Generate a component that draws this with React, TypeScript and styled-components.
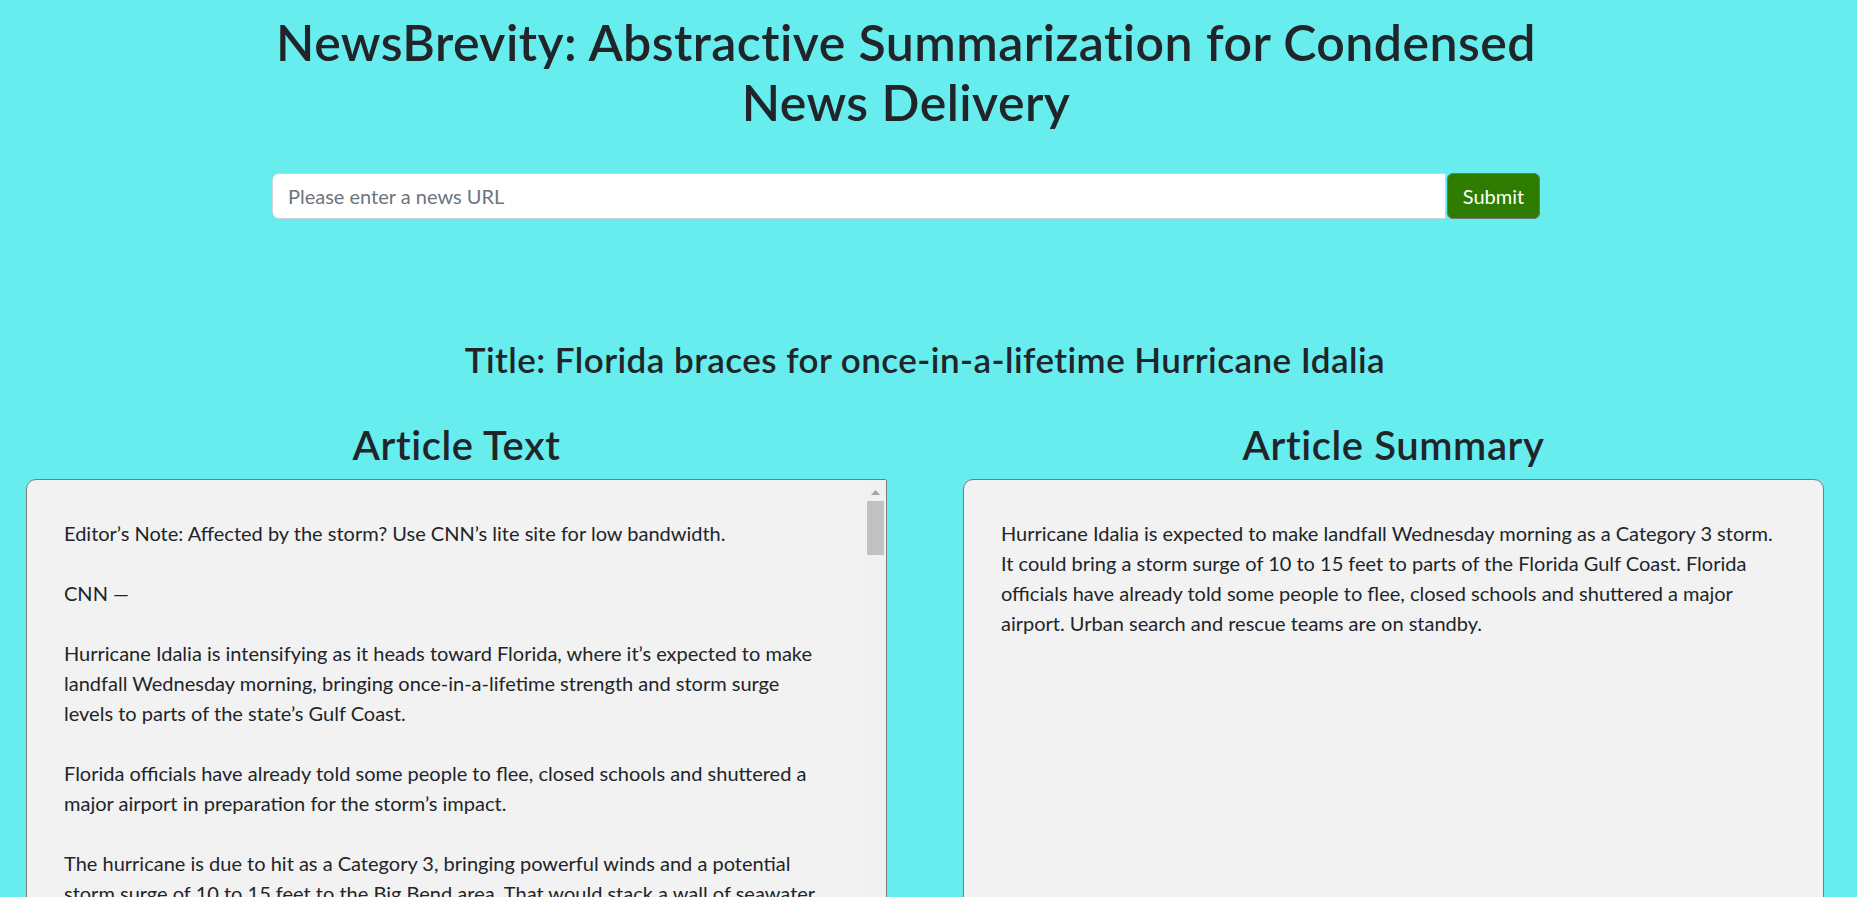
import React from "react";
import styled, { createGlobalStyle } from "styled-components";

const GlobalStyle = createGlobalStyle`
  html, body { margin: 0; padding: 0; }
  body {
    background: #67edee;
    font-family: Lato, "Liberation Sans", sans-serif;
    color: #212529;
    font-size: 20px;
    line-height: 1.5;
  }
  * { box-sizing: border-box; }
`;

const Page = styled.div`
  padding: 12px 0 40px;
`;

const Header = styled.header`
  width: 1268px;
  margin-left: 272px;
  display: flex;
  flex-direction: column;
  align-items: center;
`;

const AppTitle = styled.h1`
  margin: 0;
  font-size: 50px;
  font-weight: 600;
  line-height: 60px;
  letter-spacing: 0.45px;
  text-align: center;
`;

const SearchForm = styled.form`
  display: flex;
  width: 100%;
  gap: 1px;
  margin-top: 41px;
`;

const UrlInput = styled.input`
  flex: 1;
  height: 46px;
  padding: 0 15px;
  font-family: inherit;
  font-size: 20px;
  color: #212529;
  background: #fff;
  border: 1px solid #ced4da;
  border-radius: 7px 0 0 7px;
  outline: none;
  &::placeholder { color: #6c757d; }
`;

const SubmitButton = styled.button`
  width: 93px;
  height: 46px;
  font-family: inherit;
  font-size: 20px;
  color: #fff;
  background: #2e7d00;
  border: 1px solid #6c757d;
  border-radius: 6px;
  cursor: pointer;
`;

const Main = styled.main`
  padding: 0 33px 0 26px;
  margin-top: 119px;
`;

const ArticleTitle = styled.h3`
  margin: 0;
  font-size: 35px;
  font-weight: 600;
  line-height: 42px;
  letter-spacing: 0.45px;
  text-align: center;
`;

const Columns = styled.div`
  display: grid;
  grid-template-columns: 1fr 1fr;
  gap: 76px;
  margin-top: 41px;
`;

const Column = styled.section`
  display: flex;
  flex-direction: column;
  min-width: 0;
`;

const SectionHeading = styled.h2`
  margin: 0 0 10px;
  font-size: 40px;
  font-weight: 600;
  line-height: 48px;
  letter-spacing: 0.6px;
  text-align: center;
`;

const Card = styled.div<{ $scroll?: boolean }>`
  position: relative;
  height: 440px;
  padding: 38px ${(p) => (p.$scroll ? "26px" : "37px")} 38px 37px;
  background: #f2f2f2;
  border: 1px solid #7b7b7b;
  border-radius: ${(p) => (p.$scroll ? "10px 2px 10px 10px" : "10px")};
  overflow: hidden;
  white-space: pre-line;
`;

const Scrollbar = styled.div`
  position: absolute;
  top: 0;
  right: 0;
  bottom: 0;
  width: 21px;
  display: flex;
  flex-direction: column;
  background: #f1f1f1;
`;

const ScrollArrow = styled.div`
  height: 21px;
  display: flex;
  align-items: center;
  justify-content: center;
  padding-top: 3px;
  flex-shrink: 0;
`;

const ScrollThumb = styled.div`
  height: 54px;
  margin: 0 2px;
  background: #c1c1c1;
  flex-shrink: 0;
`;

const Paragraph = styled.p`
  margin: 0 0 30px;
  &:last-of-type { margin-bottom: 0; }
`;

const articleParagraphs = [
  "Editor’s Note: Affected by the storm? Use CNN’s lite site for low bandwidth.",
  "CNN —",
  "Hurricane Idalia is intensifying as it heads toward Florida, where it’s expected to make\nlandfall Wednesday morning, bringing once-in-a-lifetime strength and storm surge\nlevels to parts of the state’s Gulf Coast.",
  "Florida officials have already told some people to flee, closed schools and shuttered a\nmajor airport in preparation for the storm’s impact.",
  "The hurricane is due to hit as a Category 3, bringing powerful winds and a potential\nstorm surge of 10 to 15 feet to the Big Bend area. That would stack a wall of seawater\ntaller than a one-story home in the region, which is especially vulnerable to surge.",
  "“These impacts are going to be likely historic,” National Weather Service Tallahassee\nmeteorologist Ryan Wright said Tuesday morning. “There is no hurricane on record\nthat has ever gone into Apalachee Bay.”",
  "Idalia was a Category 1 storm with sustained winds of 90 mph Tuesday afternoon and\nwas expected to rapidly strengthen over the warm waters of the Gulf of Mexico.",
  "Urban search and rescue teams are on standby, and the Florida National Guard has\nactivated thousands of soldiers to help with response efforts across the state.",
];

const summaryText =
  "Hurricane Idalia is expected to make landfall Wednesday morning as a Category 3 storm. It could bring a storm surge of 10 to 15 feet to parts of the Florida Gulf Coast. Florida officials have already told some people to flee, closed schools and shuttered a major airport. Urban search and rescue teams are on standby.";

function UpArrow() {
  return (
    <svg width="9" height="5" viewBox="0 0 9 5" aria-hidden="true">
      <path d="M0 5 L4.5 0 L9 5 Z" fill="#a3a3a3" />
    </svg>
  );
}

export default function App() {
  return (
    <>
      <GlobalStyle />
      <Page>
        <Header>
          <AppTitle>
            NewsBrevity: Abstractive Summarization for Condensed News Delivery
          </AppTitle>
          <SearchForm onSubmit={(e) => e.preventDefault()}>
            <UrlInput type="text" placeholder="Please enter a news URL" />
            <SubmitButton type="submit">Submit</SubmitButton>
          </SearchForm>
        </Header>
        <Main>
          <ArticleTitle>
            Title: Florida braces for once-in-a-lifetime Hurricane Idalia
          </ArticleTitle>
          <Columns>
            <Column>
              <SectionHeading>Article Text</SectionHeading>
              <Card $scroll>
                {articleParagraphs.map((t, i) => (
                  <Paragraph key={i}>{t}</Paragraph>
                ))}
                <Scrollbar>
                  <ScrollArrow>
                    <UpArrow />
                  </ScrollArrow>
                  <ScrollThumb />
                </Scrollbar>
              </Card>
            </Column>
            <Column>
              <SectionHeading>Article Summary</SectionHeading>
              <Card>
                <Paragraph>{summaryText}</Paragraph>
              </Card>
            </Column>
          </Columns>
        </Main>
      </Page>
    </>
  );
}
